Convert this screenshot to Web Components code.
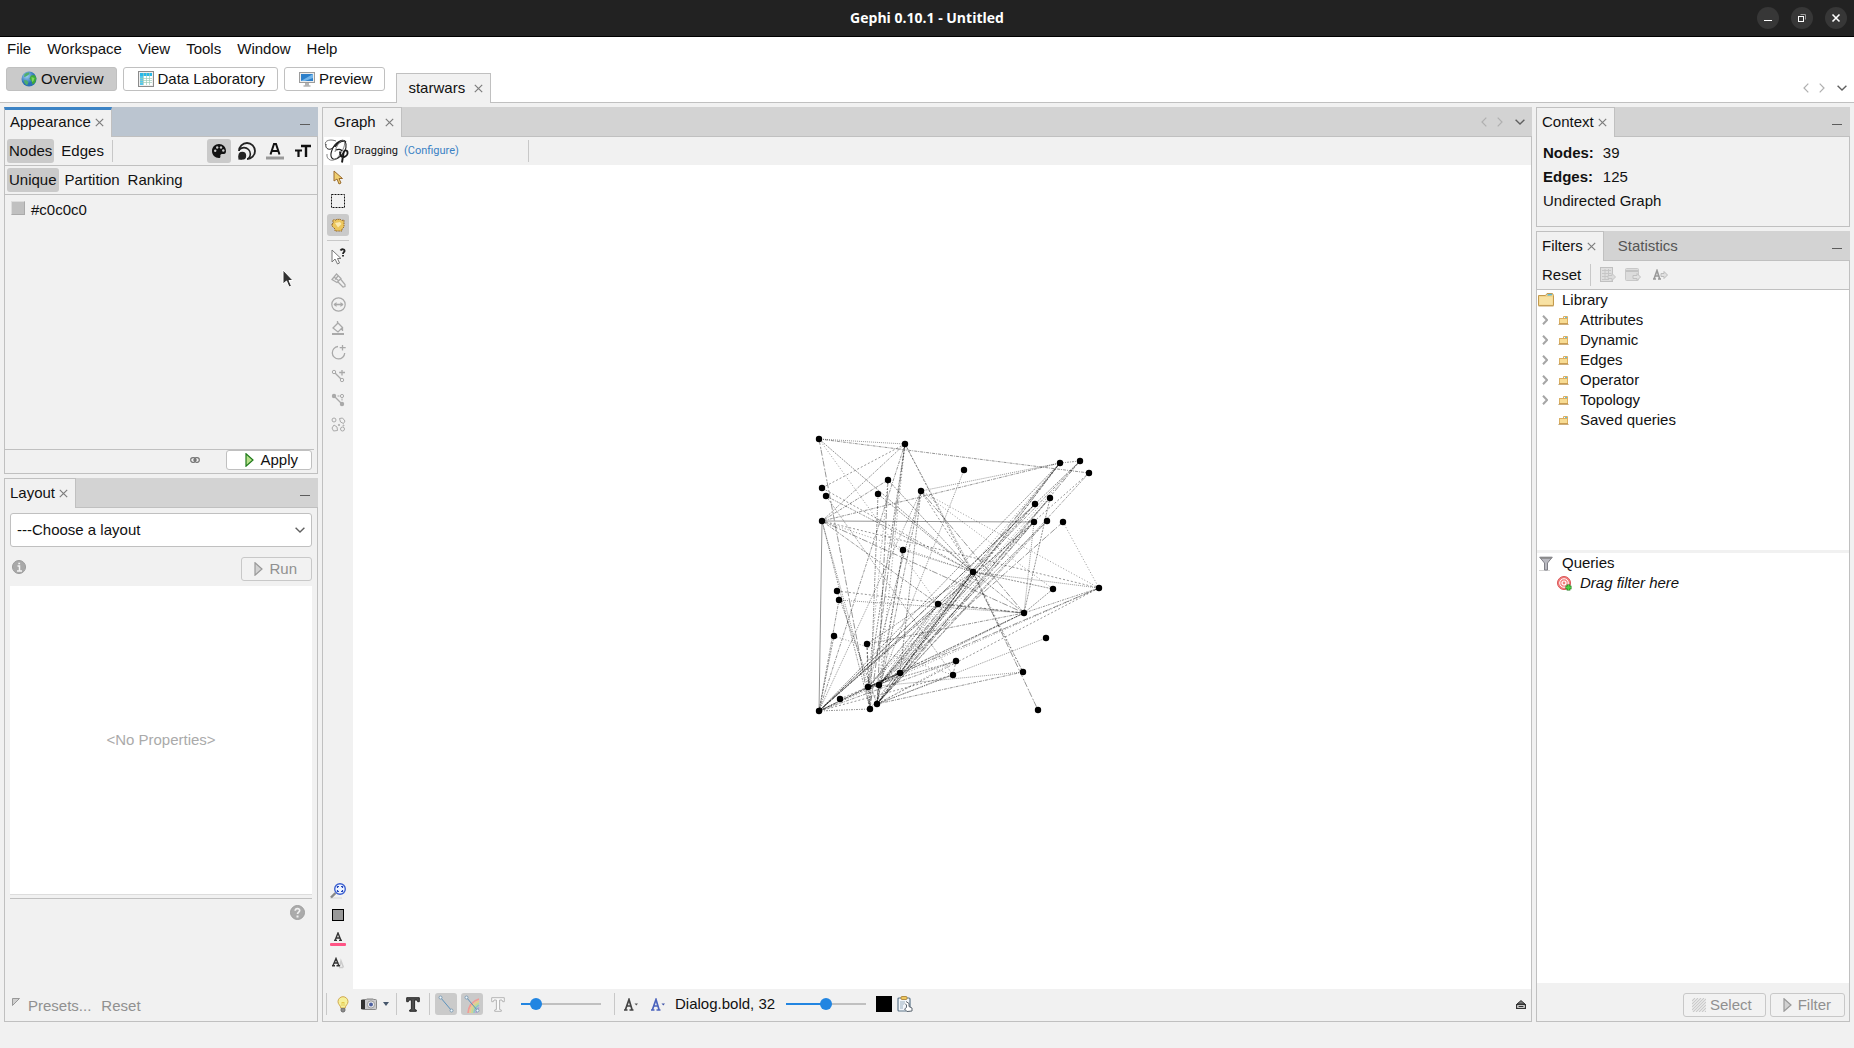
<!DOCTYPE html>
<html lang="en">
<head>
<meta charset="utf-8">
<title>Gephi 0.10.1 - Untitled</title>
<style>
html, body { margin: 0; height: 100%; }
body { font: 15px/18px "Liberation Sans", Arial, sans-serif; color: #111; background: #f1f1f1; overflow: hidden; }
</style>
</head>
<body>
<gephi-app></gephi-app>
<script>
const BASE = `
:host { display: block; box-sizing: border-box; }
* { box-sizing: border-box; }
button, select, input { font: inherit; color: inherit; margin: 0; }
button { background: none; border: 0; padding: 0; display: flex; align-items: center; justify-content: center; white-space: nowrap; flex: none; }
button:disabled { color: #909090; }
.sq { width: 22px; height: 22px; border-radius: 3px; }
.on { background: #cacaca; }
.sep { width: 1px; height: 22px; background: #c8c8c8; flex: none; }
.row { display: flex; align-items: center; }
.grow { flex: 1; min-width: 0; }
.box { border: 1px solid #c0c0c0; border-radius: 3px; background: #fff; height: 24px; }
.box:disabled { background: #f2f2f2; border-color: #c8c8c8; }
`;
function define(name, html, css = '', after) {
  customElements.define(name, class extends HTMLElement {
    connectedCallback() {
      if (this.shadowRoot) return;
      const root = this.attachShadow({ mode: 'open' });
      root.innerHTML = `<style>${BASE}${css}</style>` + (typeof html === 'function' ? html(this) : html);
      if (after) after(this, root);
    }
  });
}

const G = '#a9a9a9';
const ICONS = {
  min: [22, 22, `<circle cx="11" cy="11" r="11" fill="#373737"/><path d="M7 13.500h8" stroke="#fff"/>`],
  max: [22, 22, `<circle cx="11" cy="11" r="11" fill="#373737"/><path d="M9.500 7.500h5v5" stroke="#999" fill="none"/><rect x="7.500" y="9.500" width="5" height="5" fill="none" stroke="#fff"/>`],
  close: [22, 22, `<circle cx="11" cy="11" r="11" fill="#373737"/><path d="M7.500 7.500l7 7m0-7l-7 7" stroke="#fff" stroke-width="1.600"/>`],
  x: [9, 9, `<path d="M.8.8l7.400 7.400m0-7.400L.8 8.200" stroke="#7d7d7d" stroke-width="1.200"/>`],
  dash: [10, 2, `<path d="M0 .5h10" stroke="#5c5c5c"/>`],
  left: [6, 10, `<path d="M5.300.6L1 5l4.300 4.400" fill="none" stroke="#b0b0b0" stroke-width="1.200"/>`],
  right: [6, 10, `<path d="M.7.6L5 5 .7 9.400" fill="none" stroke="#b0b0b0" stroke-width="1.200"/>`],
  down: [10, 6, `<path d="M.6.7L5 5 9.400.7" fill="none" stroke="#606060" stroke-width="1.400"/>`],
  globe: [16, 16, `<defs><radialGradient id="a" cx=".35" cy=".3"><stop offset="0" stop-color="#9fd0f2"/><stop offset="1" stop-color="#2b6fb5"/></radialGradient></defs><circle cx="8" cy="8" r="7.500" fill="url(#a)"/><path d="M3.500 3Q6 1 8 1.500L8.500 3 6.500 4.500 5 5.500 3 6Z M3 9l3 .5 1.500 2-1.500 3L3.500 12Z" fill="#4fae6c"/><path d="M10 4.500L13.500 4l2 3-1.500 5-2.500 1.500-1-3.500L8.500 7.500Z" fill="#3fa93a"/><path d="M10.500 6l3 1-1 3-1.500 1Z" fill="#7fd65e"/>`],
  table: [16, 16, `<rect x=".5" y=".5" width="15" height="15" fill="#eee" stroke="#8b8b8b"/><rect x="2" y="2" width="12" height="3" fill="#27b8e8"/><rect x="2" y="5" width="3" height="9" fill="#53c8ee"/><path d="M5 5h9v9H5Z" fill="#fff"/><path d="M2 7.500h12M2 9.500h12M2 11.500h12M5.500 2v12M8.500 2v12M11.500 2v12" stroke="#9bcbb9" stroke-width=".7"/>`],
  screen: [16, 16, `<rect x=".5" y="1.500" width="15" height="10" fill="#ececec" stroke="#9c9c9c"/><rect x="2" y="3" width="12" height="7" fill="#2c7fca"/><path d="M2 10L14 3v4L6 10Z" fill="#73b5ea"/><path d="M6 12h4v2.500H6Z" fill="#b3b3b3"/><path d="M4.500 15h7" stroke="#8d8d8d"/>`],
  palette: [16, 16, `<path d="M8 1C4 1 1 4 1 8s3 7 7 7c1 0 1.600-.8 1.400-1.600C9.100 12 9.600 11 11 11h2c1.300 0 2-1.200 2-3 0-4-3-7-7-7Z" fill="#111"/><circle cx="4.200" cy="7.800" r="1.200" fill="#cacaca"/><circle cx="6.200" cy="4.500" r="1.200" fill="#cacaca"/><circle cx="10" cy="4.500" r="1.200" fill="#cacaca"/><circle cx="12.300" cy="7.500" r="1.200" fill="#cacaca"/>`],
  rings: [18, 18, `<g fill="none" stroke="#222"><path d="M1 9A8 8 0 1 1 9 17" stroke-width="1.800"/><path d="M1.500 7.500A5.600 5.600 0 1 1 10.500 16.500" stroke-width="1.600"/></g><circle cx="4.300" cy="13.700" r="3.900" fill="#222"/><path d="M.4 13.700h3.900v3.900H.4Z" fill="#222"/>`],
  letterA: [18, 18, `<path d="M4.500 12.500L8 2h2l3.500 10.500M6 9h6" fill="none" stroke="#111" stroke-width="2"/><path d="M0 16h18" stroke="#9a9a9a" stroke-width="3"/>`],
  tt: [16, 14, `<path d="M6 2h10M11 2v11" stroke="#111" stroke-width="2.400"/><path d="M0 6.500h7M3.500 6.500V13" stroke="#111" stroke-width="2.200"/>`],
  link: [10, 6, `<rect x=".7" y=".7" width="5" height="4.600" rx="2.200" fill="none" stroke="#777" stroke-width="1.200"/><rect x="4.300" y=".7" width="5" height="4.600" rx="2.200" fill="none" stroke="#777" stroke-width="1.200"/><path d="M3 3h4" stroke="#777"/>`],
  play: [9, 14, `<path d="M1 .8L8 7 1 13.200Z" fill="#b6e08a" stroke="#1e7a1a" stroke-width="1.200"/>`],
  playoff: [9, 14, `<path d="M1 .8L8 7 1 13.200Z" fill="#d2d2d2" stroke="#999" stroke-width="1.200"/>`],
  info: [14, 14, `<circle cx="7" cy="7" r="6.500" fill="#a9a9a9" stroke="#9a9a9a"/><path d="M5.500 6h2v5M5 11h5M6.300 3.500h1.800" stroke="#f4f4f4" stroke-width="1.500" fill="none"/>`],
  help: [15, 15, `<circle cx="7.500" cy="7.500" r="7" fill="#ababab" stroke="#9f9f9f"/><path d="M5.200 5.700c.2-3 4.600-2.600 4.500-.1 0 1.400-2.200 1.600-2.200 3.400" stroke="#f0f0f0" stroke-width="1.700" fill="none"/><path d="M7.500 10.500v2" stroke="#f0f0f0" stroke-width="2"/>`],
  corner: [8, 8, `<path d="M.5.5h7l-7 7Z" fill="#d0d0d0" stroke="#999"/>`],
  logo: [26, 28, `<rect width="26" height="28" fill="#fff"/><g fill="none" stroke="#1c1c1c"><path d="M22 5C19 1 11 5 8 13s1 11 6 8 9-9 8-14-7-3-11 3" stroke-width="1.100"/><path d="M2 7c-1 4 2 6 5 5s7-8 12-8" stroke-width="1"/><path d="M12 4C7 2 0 3 1.500 8" stroke="#555" stroke-width=".8"/><path d="M3 17c-1 6 6 9 11 3s8-13 6-16-8 5-9 11" stroke="#777" stroke-width=".9"/><path d="M12 13c2-1 5-1 6 1" stroke-width="1.200"/><path d="M16 14.500c0 5 2 6 4 5.500s4-2.500 3.500-5-3.500-2-4 1L18 25.500" stroke-width="1.900"/></g>`],
  pointer: [10, 15, `<path d="M1 1v10l3-2 2 5 2-1-2-4.500h3.500Z" fill="#f0cf70" stroke="#9a6b2e"/>`],
  marquee: [14, 14, `<rect x=".5" y=".5" width="13" height="13" fill="none" stroke="#111" stroke-dasharray="2 1"/>`],
  hand: [14, 14, `<path d="M1 6l1.500-1L1.500 2.500l2-1L5 2.500l1-1.500 2 .5L9 1l1.500 1.500L13 2v7l-2 2v2H4v-2L1 8Z" fill="#ecc65d"/><path d="M1 6l1.500-1L1.500 2.500l2-1L5 2.500l1-1.500 2 .5L9 1l1.500 1.500L13 2v7l-2 2v2H4v-2L1 8Z" fill="none" stroke="#93662b" stroke-dasharray="1.500 .8"/><path d="M4 5L9 4l1.500 2L7 9.500Z" fill="#fbeab2"/>`],
  query: [15, 17, `<path d="M1 2v12l3-3 2.500 5 2-1-2-4.500H10Z" fill="#fff" stroke="#777"/><path d="M9.500 2.500c1-2 4.500-1.500 4 .7-.2 1-1.500 1.200-1.500 2.800M12 7v1.500" fill="none" stroke="#222" stroke-width="1.800"/>`],
  brush: [15, 15, `<path d="M1 6.500L5.500 1 10 5.500 6 9.500Z M3 4l5 4M9.500 6L14 11.500v2l-2 .5-5-5M4 6.500L7 3" fill="none" stroke="${G}" stroke-width="1.200"/>`],
  sizer: [15, 15, `<circle cx="7.500" cy="7.500" r="6.700" fill="none" stroke="${G}" stroke-width="1.200"/><path d="M3 7.500h9" stroke="${G}" stroke-width="1.600"/><path d="M5.500 5v5L2.500 7.500ZM9.500 5v5l3-2.500Z" fill="${G}"/>`],
  bucket: [14, 14, `<path d="M2 7l5-5 4.500 4.500L7 11ZM6.500 0v3M11.500 6.500V10" fill="none" stroke="${G}" stroke-width="1.300"/><path d="M1 13h12" stroke="${G}" stroke-width="2"/>`],
  addnode: [15, 15, `<path d="M7 1.500A6.200 6.200 0 1 0 13.700 8M11.500 0v5.500M8.700 2.700h6" fill="none" stroke="${G}" stroke-width="1.300"/>`],
  addedge: [14, 14, `<path d="M4 4l6 6M11 1v5.500M8.200 3.500H14" stroke="${G}" stroke-width="1.300"/><circle cx="3" cy="3" r="1.700" fill="none" stroke="${G}"/><circle cx="11" cy="11" r="1.700" fill="none" stroke="${G}"/>`],
  path: [14, 14, `<path d="M3 3l8 8" stroke="${G}" stroke-width="1.300"/><path d="M3 3h8v8" stroke="${G}" stroke-dasharray="2 1.500" fill="none"/><circle cx="3" cy="3" r="2.200" fill="${G}"/><circle cx="11" cy="11" r="2.200" fill="${G}"/><circle cx="11" cy="3" r="1.600" fill="#f1f1f1" stroke="${G}"/>`],
  cluster: [15, 15, `<g fill="none" stroke="${G}"><circle cx="3" cy="3" r="2"/><path d="M8.500 1.500l3-.5 2.500 3-1.500 2.500-3-1.500ZM3 8l3 2 .5 3.500-4 .5-1.500-3Z"/><circle cx="11.500" cy="12" r="2"/><circle cx="8" cy="8" r=".7"/><circle cx="12.500" cy="8.500" r=".5"/></g>`],
  zoom: [16, 16, `<path d="M0 15h12" stroke="#d6d6d6"/><path d="M5.500 10L1 14.500" stroke="#888" stroke-width="2.400"/><circle cx="10" cy="6" r="5.300" fill="#eef4ff" stroke="#3b5fd0" stroke-width="1.400"/><path d="M7.500 5V3.500H9M11 3.500h1.500V5M12.500 7v1.500H11M9 8.500H7.500V7" fill="none" stroke="#2347bd" stroke-width="1.200"/>`],
  gray: [12, 12, `<rect x=".5" y=".5" width="11" height="11" fill="#999" stroke="#000"/>`],
  pinkA: [16, 14, `<path d="M4 8.400h3M9 8.400h3M5.200 8L8 1l2.800 7M6.500 6h3" fill="none" stroke="#333" stroke-width="1.400"/><rect y="11" width="16" height="3" rx="1" fill="#ff5485"/>`],
  shadeA: [14, 12, `<path d="M8 10.500h4M9 9l1-5 2.500 6.500" fill="none" stroke="#ccc" stroke-width="1.500"/><path d="M1 8.800h3M5.500 8.800H9M2 8.500L5 1.500l2.800 7M3.500 6h4" fill="none" stroke="#333" stroke-width="1.400"/>`],
  bulb: [12, 17, `<path d="M6 .7a5 5 0 0 0-5 5C1 8.500 3.500 9 3.800 12h4.400C8.500 9 11 8.500 11 5.700a5 5 0 0 0-5-5Z" fill="#f6f09a" stroke="#d0a84f"/><path d="M4 12.500h4v2.500l-1 1H5l-1-1Z" fill="#8b8b8b" stroke="#666" stroke-width=".7"/><path d="M5 10V6l1 1 1-1v4" fill="none" stroke="#e0bd3a" stroke-width=".7"/>`],
  camera: [16, 14, `<rect x=".5" y="2.500" width="15" height="10" rx="1" fill="#c9c9cd" stroke="#888"/><path d="M6 1h6l1 1.500H5Z" fill="#bbb"/><rect x="0" y="3" width="4" height="9" fill="#303030"/><circle cx="10" cy="7.500" r="3.600" fill="#eee" stroke="#8b8b8b" stroke-width=".8"/><circle cx="10" cy="7.500" r="2" fill="#4d60a0"/>`],
  tri: [6, 4, `<path d="M0 0h6L3 4Z" fill="#45566b"/>`],
  bigT: [14, 15, `<path d="M.7.7h12.600v4h-1.600L11 3H8.600v9.500l1.700.5v1.300H3.700V13l1.700-.5V3H3L2.300 4.700H.7Z" fill="#4c4c4c" stroke="#2b2b2b"/>`],
  outT: [14, 15, `<path d="M.7.7h12.600v4h-1.600L11 3H8.600v9.500l1.700.5v1.300H3.700V13l1.700-.5V3H3L2.300 4.700H.7Z" fill="#fafafa" stroke="#b4b4b4"/>`],
  edge: [16, 18, `<path d="M2.500 2.500l11 13" stroke="#5b92bd"/><circle cx="2.500" cy="2.500" r="1.500" fill="#eef5fb" stroke="#6f93ad" stroke-width=".8"/><circle cx="13.500" cy="15.500" r="1.500" fill="#eef5fb" stroke="#6f93ad" stroke-width=".8"/>`],
  rainbow: [16, 18, `<g fill="none" stroke-width="1.600"><path d="M4 18Q5 7 15 4" stroke="#f09a96"/><path d="M6 18Q6.500 9 15 6" stroke="#f0c98a"/><path d="M8 18Q8.500 11 15 8" stroke="#c4dc8e"/><path d="M10 18Q10 13 15 10" stroke="#8fc8c4"/><path d="M12 18Q12 15 15 12.500" stroke="#b79bd6"/></g><path d="M2.500 2.500l11 13" stroke="#5b92bd"/><circle cx="2.500" cy="2.500" r="1.500" fill="#eef5fb" stroke="#6f93ad" stroke-width=".8"/><circle cx="13.500" cy="15.500" r="1.500" fill="#eef5fb" stroke="#6f93ad" stroke-width=".8"/>`],
  Adark: [14, 13, `<path d="M0 12h3.500M5.500 12H9.500M1.500 11.500L5 1.500l3 10M3 8h4" fill="none" stroke="#444" stroke-width="1.700"/><path d="M10.500 5.500h3.500l-1.700 2Z" fill="#555"/>`],
  Ablue: [14, 13, `<path d="M0 12h3.500M5.500 12H9.500M1.500 11.500L5 1.500l3 10M3 8h4" fill="none" stroke="#4a63bd" stroke-width="1.700"/><path d="M10.500 5.500h3.500l-1.700 2Z" fill="#3d52a8"/>`],
  black: [16, 16, `<rect width="16" height="16" fill="#000"/>`],
  clip: [16, 16, `<rect x="1" y="2" width="12" height="13" rx="1" fill="#f2f6fa" stroke="#60788c" stroke-width="1.200"/><rect x="4" y=".5" width="6" height="3" rx="1" fill="#f0c860" stroke="#a37a2c" stroke-width=".8"/><path d="M3 6h5M3 8h4M3 10h3M3 12h3" stroke="#9bb0c1"/><path d="M9 5.500l3 2v3l3 1.500v3l-5 .5-2.500-2.500 2-1.500V9L8 7.500" fill="#fff" stroke="#5c6670"/>`],
  eject: [10, 9, `<path d="M5 .6L9 4H1Z" fill="#777" stroke="#333"/><rect x=".6" y="4.600" width="8.800" height="3.800" fill="#eee" stroke="#333" stroke-width="1.200"/><path d="M2.500 6.500h5" stroke="#333"/>`],
  exptable: [16, 16, `<rect x=".5" y=".5" width="12" height="14" fill="#dedede" stroke="#c0c0c0"/><path d="M2 3.500h9M2 6.500h9M2 9.500h9M2 12.500h6M5 2v11M8.500 2v11" stroke="#c6c6c6"/><path d="M8 8.500h4v-2l3.500 3.500-3.500 3.500v-2H8Z" fill="#dcdcdc" stroke="#c4c4c4"/>`],
  expwin: [16, 16, `<rect x=".5" y="1.500" width="13" height="12" rx="1" fill="#dcdcdc" stroke="#c8c8c8"/><path d="M1 4h12" stroke="#bbb" stroke-width="1.500"/><path d="M8 8.500h4v-2l3.500 3.500-3.500 3.500v-2H8Z" fill="#e2e2e2" stroke="#c0c0c0"/>`],
  expA: [18, 12, `<path d="M3 10h3M8 10h3M4.200 9.500L7 1.500l2.600 8M5.500 7h3.500" fill="none" stroke="#999" stroke-width="1.600"/><path d="M11 4.500h3v-2L17.500 6 14 9.500v-2h-3Z" fill="#e0e0e0" stroke="#bbb"/>`],
  bigfolder: [16, 14, `<path d="M.5 2.500h7L9 .5h5.500l1 2v10H.5Z" fill="#f3d58c" stroke="#c39a4e"/><path d="M9.500 2L14 1.500" stroke="#58b6d8" stroke-width="1.500"/><path d="M1.500 4h13v7.500h-13Z" fill="#f8e2a4"/><path d="M.5 13h15" stroke="#c9a562"/>`],
  folder: [11, 9, `<path d="M5.500 2.500v-2h4v2" fill="#fff" stroke="#dcae62"/><path d="M7 1.500h2" stroke="#60bfe0"/><rect x="1.500" y="2.500" width="8" height="5" fill="#f7dc94" stroke="#dcb062"/><path d="M0 8.500h11" stroke="#dccfb5"/><path d="M1 8h9" stroke="#b98b45"/>`],
  chev: [6, 10, `<path d="M1 .8L5 5 1 9.200" fill="none" stroke="#a6a6a6" stroke-width="2"/>`],
  funnel: [14, 15, `<path d="M0 14.500h11" stroke="#d5d5d5"/><path d="M.7 1.200h12.600L8.500 7v7h-3V7Z" fill="#b9b9c0" stroke="#7e7e86"/><path d="M1.500 2h11" stroke="#858585" stroke-width="1.500"/>`],
  target: [16, 15, `<circle cx="7" cy="7" r="6.500" fill="#f27e7e" stroke="#d95454"/><circle cx="7" cy="7" r="4.300" fill="none" stroke="#fff"/><circle cx="7" cy="7" r="2" fill="none" stroke="#fff" stroke-width="1.200"/><path d="M11.500 8.500v6M8.500 11.500h6" stroke="#23781f" stroke-width="3.600"/><path d="M11.500 9v5M9 11.500h5" stroke="#4ed044" stroke-width="1.800"/>`],
  hatch: [14, 14, `<path d="M0 3L3 0M0 6l6-6M0 9l9-9M0 12L12 0M1 14L14 1M4 14L14 4M7 14l7-7M10 14l4-4M13 14l1-1" stroke="#cacaca" stroke-width="1.100"/>`],
  cursor: [11, 19, `<path d="M1 1v14l3.500-3L7 18l2.500-1L7 11.500h4Z" fill="#333" stroke="#fff"/>`]
};
define('g-icon', el => { const [w, h, s] = ICONS[el.getAttribute('name')]; return `<svg width="${w}" height="${h}" viewBox="0 0 ${w} ${h}" aria-hidden="true">${s}</svg>`; },
  `:host{flex:none} svg{display:block}`);

define('title-bar', `<span class="side"></span><h1><slot></slot></h1><div class="side win">
  <button aria-label="Minimize"><g-icon name="min"></g-icon></button><button aria-label="Restore"><g-icon name="max"></g-icon></button><button aria-label="Close"><g-icon name="close"></g-icon></button></div>`,
  `:host{display:flex;align-items:center;height:37px;flex:none;background:#222;border-bottom:1px solid #000;color:#fff}
   h1{margin:0;font:700 14px/20px "Open Sans","Noto Sans",sans-serif}
   .side{flex:1;padding:0 7px 0 0}.win{display:flex;justify-content:flex-end;gap:12px}`);

define('menu-bar', `<nav>${['File','Workspace','View','Tools','Window','Help'].map(t => `<button>${t}</button>`).join('')}</nav>`,
  `:host{background:#fff} nav{display:flex;height:24px;padding-left:7px;gap:16px}`);

define('doc-tab', `<slot></slot><button aria-label="Close tab"><g-icon name="x"></g-icon></button>`,
  `:host{display:flex;align-items:center;height:30px;background:#f1f1f1;border:1px solid #c0c0c0;border-bottom:0;padding:0 7px 1px 5px;gap:4px;color:#111;flex:none;white-space:nowrap}
   :host([wide]){padding:0 7px 1px 11px;gap:9px}
   :host([active]){border-top:3px solid #3c83c5;padding-bottom:3px}
   button{margin-top:1px}`);

define('nav-arrows', `<button aria-label="Previous"><g-icon name="left"></g-icon></button><button aria-label="Next"><g-icon name="right"></g-icon></button><button class="list" aria-label="List"><g-icon name="down"></g-icon></button>`,
  `:host{display:flex;align-items:center;gap:10px;padding-right:7px} .list{margin-left:2px}`);

define('mode-bar', `<div class="modes">
   <button class="box cur"><g-icon name="globe"></g-icon>Overview</button>
   <button class="box"><g-icon name="table"></g-icon>Data Laboratory</button>
   <button class="box"><g-icon name="screen"></g-icon>Preview</button></div>
   <doc-tab wide>starwars</doc-tab><div class="rest"><nav-arrows></nav-arrows></div>`,
  `:host{display:flex;align-items:flex-end;height:42px;background:#fff;flex:none}
   .modes,.rest{align-self:stretch;border-bottom:1px solid #c0c0c0;display:flex}
   .modes{padding:6px 11px 0 6px;gap:6px}.modes button{padding:0 12px 0 14px;gap:4px}.modes .cur{background:#cacaca}
   .rest{flex:1;justify-content:flex-end;padding-top:12px}`);

define('dock-panel', el => `<header><doc-tab ${el.hasAttribute('active') ? 'active' : ''} ${el.hasAttribute('wide') ? 'wide' : ''}>${el.getAttribute('label')}</doc-tab>
   <div class="bar"><slot name="tab"></slot><span class="grow"></span><slot name="tools"><button class="mini" aria-label="Minimize panel"><g-icon name="dash"></g-icon></button></slot></div></header>
   <section><slot></slot></section>`,
  `:host{display:flex;flex-direction:column;min-height:0;min-width:0}
   header{display:flex;flex:none}
   .bar{flex:1;display:flex;align-items:center;background:#d3d3d3;border-bottom:1px solid #c0c0c0}
   :host([active]) .bar{background:#bbc5d0}
   .mini{margin:7px 8px 0 0}
   section{flex:1;min-height:0;display:flex;flex-direction:column;border:1px solid #c0c0c0;border-top:0}`);

define('appearance-pane', `
  <div class="row bar first"><button class="t on">Nodes</button><button class="t">Edges</button><span class="sep"></span><span class="grow"></span>
   <div class="row icons"><button class="on" aria-label="Color"><g-icon name="palette"></g-icon></button><button aria-label="Size"><g-icon name="rings"></g-icon></button><button aria-label="Label color"><g-icon name="letterA"></g-icon></button><button aria-label="Label size"><g-icon name="tt"></g-icon></button></div></div>
  <div class="row bar"><button class="t on">Unique</button><button class="t">Partition</button><button class="t">Ranking</button></div>
  <div class="body"><label class="row"><button class="sw" aria-label="Color"></button>#c0c0c0</label><g-icon class="cur" name="cursor"></g-icon></div>
  <footer><button aria-label="Link"><g-icon name="link"></g-icon></button><button class="box"><g-icon name="play"></g-icon>Apply</button></footer>`,
  `:host{flex:1;display:flex;flex-direction:column;min-height:0}
   .bar{height:29px;border-bottom:1px solid #c0c0c0;padding:0 2px;gap:4px;flex:none}.first{gap:5px}
   .t{height:24px;padding:0 2px;border-radius:3px}
   .sep{margin-left:1px}.icons{gap:4px}.icons button{width:24px;height:24px;border-radius:3px}
   .body{flex:1;position:relative;padding:6px}label{height:18px;gap:6px}
   .sw{width:14px;height:14px;background:#c0c0c0;border:1px solid #aaa;border-top-color:#ddd;border-left-color:#ddd;margin-bottom:4px}
   .cur{position:absolute;left:277px;top:74px}
   footer{flex:none;height:24px;display:flex;justify-content:flex-end;align-items:flex-start;gap:26px;border-top:1px solid #c0c0c0;margin-right:3px;padding-right:2px}
   footer button:first-child{height:20px}
   .box{height:20px;padding:0 13px 0 18px;gap:6px}`);

define('layout-pane', `
  <label class="pick"><select aria-label="Layout"><option>---Choose a layout</option></select><g-icon name="down"></g-icon></label>
  <div class="row run"><g-icon name="info"></g-icon><span class="grow"></span><button class="box" disabled><g-icon name="playoff"></g-icon>Run</button></div>
  <div class="props">&lt;No Properties&gt;</div>
  <div class="desc"><g-icon name="help"></g-icon></div>
  <div class="row foot"><g-icon name="corner"></g-icon><button disabled>Presets...</button><button disabled>Reset</button></div>`,
  `:host{flex:1;display:flex;flex-direction:column;min-height:0;padding:5px}
   .pick{display:grid;align-items:center}.pick>*{grid-area:1/1}.pick g-icon{justify-self:end;margin-right:7px;pointer-events:none}
   select{appearance:none;width:100%;height:34px;border:1px solid #c0c0c0;border-radius:3px;background:#fff;padding:0 6px}
   .run{margin-top:10px;height:24px;padding-left:2px}.run g-icon[name=info]{margin-bottom:4px}.run button{padding:0 14px 0 12px;gap:6px}
   .props{flex:1;margin-top:5px;background:#fff;border-bottom:1px solid #ddd;display:flex;align-items:center;justify-content:center;color:#aaa}
   .desc{margin-top:3px;border-top:1px solid #c0c0c0;height:98px;display:flex;justify-content:flex-end;padding:6px 7px}
   .foot{height:20px;padding-left:2px}.foot g-icon{margin:0 8px 8px 0}.foot button+button{margin-left:10px}`);

define('tool-strip', `
  <button class="sq" aria-label="Direct selection"><g-icon name="pointer"></g-icon></button>
  <button class="sq" aria-label="Rectangle selection"><g-icon name="marquee"></g-icon></button>
  <button class="sq on" aria-label="Drag"><g-icon name="hand"></g-icon></button>
  <hr>
  ${['query','brush','sizer','bucket','addnode','addedge','path','cluster'].map(n => `<button class="sq" aria-label="${n}"><g-icon name="${n}"></g-icon></button>`).join('')}
  <span class="grow"></span>
  ${['zoom','gray','pinkA','shadeA'].map(n => `<button class="sq" aria-label="${n}"><g-icon name="${n}"></g-icon></button>`).join('')}`,
  `:host{display:flex;flex-direction:column;width:30px;flex:none;gap:2px;padding:1px 4px 15px}
   hr{margin:2px 0;width:22px;height:1px;border:0;background:#c8c8c8}`);

const NODES = [[819,439],[905,444],[1060,463],[1080,461],[1089,473],[964,470],[888,480],[822,488],[826,496],[878,494],[921,491],[1035,504],[1050,498],[822,521],[1034,522],[1047,521],[1063,522],[903,550],[973,572],[837,591],[839,600],[1053,589],[1099,588],[938,604],[1024,613],[834,636],[867,644],[1046,638],[956,661],[953,675],[1023,672],[900,673],[868,687],[879,685],[840,699],[819,711],[870,709],[877,704],[1038,710]];
const LINKS = { 0:[1,4,18,23,36], 1:[7,13,18,35,32,37,36,30], 2:[3,10,13,35,32,33,37,31,18], 3:[18,35,33,37], 4:[35,37], 5:[33], 6:[13,18,32,37], 7:[18], 8:[18,29],
  9:[36,18], 10:[22,24,18,32,35,37,31,21], 11:[35,33,18], 12:[37,33,24], 13:[14,18,24,22,35,36,32,23], 14:[35,33,37,32,31,24], 15:[37,33], 16:[22,33], 17:[33,37,18],
  18:[35,33,32,37,31,36,22,24,21,30,38], 19:[24,37], 20:[24,35], 21:[24], 22:[33,32,37,24], 23:[35,32,33,37,24], 24:[35,32,33,26], 25:[35,29], 26:[36,32,18], 27:[37], 28:[35,32,37,29],
  29:[35,37], 30:[32,37], 31:[35,32,33,37,18], 32:[36,35,33], 33:[35,37], 34:[31], 35:[36] };
define('graph-canvas', () => {
  const dash = ['1 1', '3 1 1 1', '2 1', '1 2', '6 2 2 1', '2 2', '1 1 2 1'];
  let n = 0, s = '';
  for (const a in LINKS) for (const b of LINKS[a]) {
    const [x, y] = NODES[a], [u, v] = NODES[b];
    s += `<path d="M${x} ${y}L${u} ${v}" stroke-dasharray="${a == 13 && (b == 14 || b == 35) ? 'none' : dash[n++ % 7]}"/>`;
  }
  return `<svg viewBox="353 165 1178 824" role="img" aria-label="Graph"><g fill="none" stroke="#000" stroke-opacity=".52" stroke-width=".8">${s}</g>${NODES.map(p => `<circle cx="${p[0]}" cy="${p[1]}" r="3.200"/>`).join('')}</svg>`;
}, `:host{flex:1;background:#fff;min-width:0;overflow:hidden} svg{display:block;width:100%;height:100%}`);

define('g-slider', el => `<input type="range" min="0" max="100" value="${el.getAttribute('value')}" aria-label="${el.getAttribute('label')}">`,
  `:host{flex:none;height:22px;display:flex;align-items:center}
   input{appearance:none;width:80px;height:12px;background:linear-gradient(90deg,#2285e1 var(--v),#c0c0c0 var(--v)) center/100% 2px no-repeat;outline:0}
   input::-webkit-slider-thumb{appearance:none;width:12px;height:12px;border-radius:6px;background:#2285e1}`,
  (el, r) => r.querySelector('input').style.setProperty('--v', el.getAttribute('value') + '%'));

define('graph-pane', `
  <div class="row top"><g-icon name="logo"></g-icon><div class="row state"><span>Dragging</span><a href="#">(Configure)</a></div></div>
  <div class="mid"><tool-strip></tool-strip><graph-canvas></graph-canvas></div>
  <div class="row bot"><span class="sep"></span>
   <button class="sq" aria-label="Background"><g-icon name="bulb"></g-icon></button>
   <button class="cam" aria-label="Screenshot"><g-icon name="camera"></g-icon><g-icon name="tri"></g-icon></button><span class="sep"></span>
   <button class="sq" aria-label="Node labels"><g-icon name="bigT"></g-icon></button><span class="sep"></span>
   <div class="row trio"><button class="sq on" aria-label="Edges"><g-icon name="edge"></g-icon></button><button class="sq on" aria-label="Edge color"><g-icon name="rainbow"></g-icon></button><button class="sq" aria-label="Edge labels"><g-icon name="outT"></g-icon></button></div>
   <g-slider class="s1" value="13" label="Edge weight"></g-slider><span class="sep"></span>
   <button class="sq" aria-label="Size mode"><g-icon name="Adark"></g-icon></button><button class="sq" aria-label="Color mode"><g-icon name="Ablue"></g-icon></button>
   <button class="font">Dialog.bold, 32</button><g-slider class="s2" value="50" label="Label size"></g-slider>
   <button aria-label="Label color"><g-icon name="black"></g-icon></button><button aria-label="Attributes"><g-icon name="clip"></g-icon></button>
   <span class="grow"></span><button aria-label="Expand"><g-icon name="eject"></g-icon></button></div>`,
  `:host{flex:1;display:flex;flex-direction:column;min-height:0}
   .top{height:28px;padding-left:1px;gap:4px;flex:none}
   .state{width:175px;height:22px;gap:6px;border-right:1px solid #c8c8c8;font:11px/16px Roboto,"Noto Sans",sans-serif}
   a{color:#3a81c4;text-decoration:none}
   .mid{flex:1;display:flex;min-height:0}
   .bot{height:32px;gap:5px;padding:0 5px 2px 3px;flex:none}
   .cam{gap:6px;height:22px;width:32px}.trio{gap:4px}.font{margin-left:1px}
   .s1{margin:0 8px 0 7px}.s2{margin:0 5px 0 6px}`);

define('context-pane', `<dl><dt>Nodes:</dt><dd>39</dd><dt>Edges:</dt><dd>125</dd></dl><div>Undirected Graph</div>`,
  `:host{padding:4px 6px 13px;line-height:24px} dl{display:grid;grid-template-columns:max-content 1fr;column-gap:9px;margin:0} dt{font-weight:700} dd{margin:0}`);

define('filters-pane', `
  <div class="row bar"><button>Reset</button><span class="sep"></span><button disabled aria-label="Export column"><g-icon name="exptable"></g-icon></button><button disabled aria-label="Export workspace"><g-icon name="expwin"></g-icon></button><button disabled aria-label="Export labels"><g-icon name="expA"></g-icon></button></div>
  <div class="tree lib"><div class="row root"><g-icon name="bigfolder"></g-icon>Library</div>
   <ul>${['Attributes','Dynamic','Edges','Operator','Topology','Saved queries'].map((t, i) => `<li><span class="c">${i < 5 ? '<g-icon name="chev"></g-icon>' : ''}</span><span class="f"><g-icon name="folder"></g-icon></span>${t}</li>`).join('')}</ul></div>
  <div class="tree q"><div class="row root"><g-icon name="funnel"></g-icon>Queries</div>
   <ul><li><span class="c"></span><span class="f g"><g-icon name="target"></g-icon></span><em>Drag filter here</em></li></ul></div>
  <footer><button class="box sel" disabled><g-icon name="hatch"></g-icon>Select</button><button class="box fil" disabled><g-icon name="playoff"></g-icon>Filter</button></footer>`,
  `:host{flex:1;display:flex;flex-direction:column;min-height:0}
   .bar{height:29px;border-bottom:1px solid #c0c0c0;padding-left:5px;gap:9px;flex:none}
   .tree{background:#fff;line-height:20px}.lib{flex:260 1 0}.q{flex:430 1 0;margin-top:3px}
   .root{height:20px;padding-left:1px}.root g-icon[name=bigfolder]{margin-right:8px}.root g-icon[name=funnel]{margin:0 9px 0 1px}
   ul{margin:0;padding:0;list-style:none}li{display:flex;align-items:center;height:20px;padding-left:5px}
   .c{width:16px}.f{width:22px}.g{margin-left:-1px;width:23px}
   footer{flex:none;height:38px;display:flex;gap:4px;justify-content:flex-end;padding:10px 4px 0}
   .sel{padding:0 13px 0 8px;gap:4px}.fil{padding:0 13px 0 12px;gap:6px}`);

define('gephi-app', `
  <title-bar>Gephi 0.10.1 - Untitled</title-bar><menu-bar></menu-bar><mode-bar></mode-bar>
  <main>
   <div class="col side"><dock-panel class="app" label="Appearance" active><appearance-pane></appearance-pane></dock-panel>
    <dock-panel class="lay" label="Layout"><layout-pane></layout-pane></dock-panel></div>
   <dock-panel class="mid" label="Graph" wide><nav-arrows slot="tools"></nav-arrows><graph-pane></graph-pane></dock-panel>
   <div class="col side"><dock-panel label="Context"><context-pane></context-pane></dock-panel>
    <dock-panel class="fill" label="Filters"><button slot="tab" class="st">Statistics</button><filters-pane></filters-pane></dock-panel></div>
  </main>`,
  `:host{display:flex;flex-direction:column;height:100vh}
   main{flex:1;min-height:0;display:flex;gap:4px;padding:4px 4px 26px}
   .col{display:flex;flex-direction:column;gap:4px;min-height:0}.side{width:314px;flex:none}
   .app{flex:367 1 0}.lay{flex:544 1 0}.mid,.fill{flex:1}
   .st{color:#555;margin-left:14px}`);
</script>
</body>
</html>
